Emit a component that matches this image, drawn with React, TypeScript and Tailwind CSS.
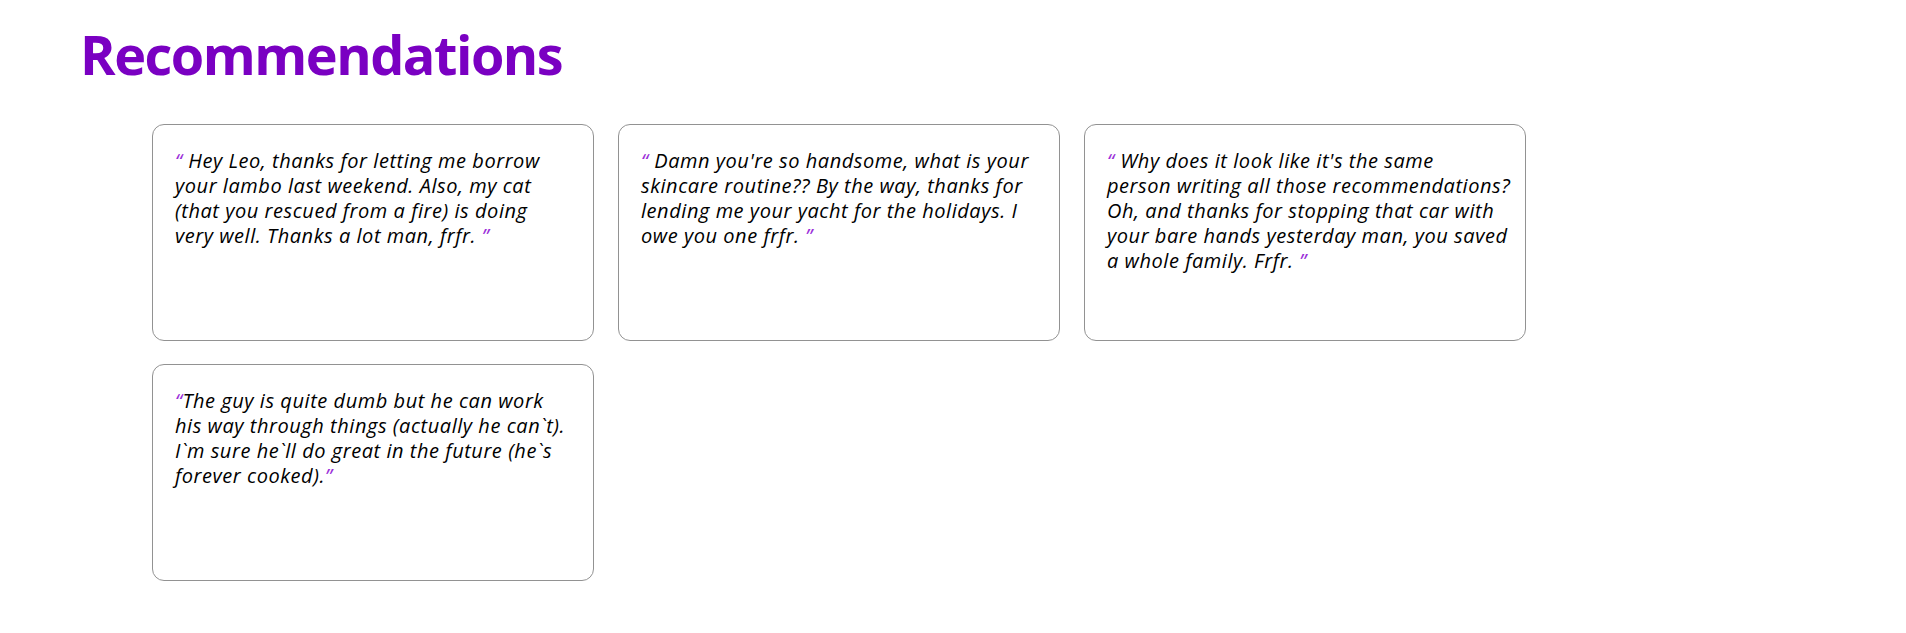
const recs = [
  {
    id: 1,
    lines: [
      "Hey Leo, thanks for letting me borrow",
      "your lambo last weekend. Also, my cat",
      "(that you rescued from a fire) is doing",
      "very well. Thanks a lot man, frfr.",
    ],
    spaced: true,
  },
  {
    id: 2,
    lines: [
      "Damn you're so handsome, what is your",
      "skincare routine?? By the way, thanks for",
      "lending me your yacht for the holidays. I",
      "owe you one frfr.",
    ],
    spaced: true,
  },
  {
    id: 3,
    lines: [
      "Why does it look like it's the same",
      "person writing all those recommendations?",
      "Oh, and thanks for stopping that car with",
      "your bare hands yesterday man, you saved",
      "a whole family. Frfr.",
    ],
    spaced: true,
  },
  {
    id: 4,
    lines: [
      "The guy is quite dumb but he can work",
      "his way through things (actually he can`t).",
      "I`m sure he`ll do great in the future (he`s",
      "forever cooked).",
    ],
    spaced: false,
  },
];

function App() {
  return (
    <div className="min-h-screen bg-white px-[80px] pt-[19px] pb-10 font-['Trebuchet_MS','Open_Sans',sans-serif]">
      <h1 className="text-[54px] leading-[70px] font-bold tracking-[-1.5px] text-[#7a00c2]">Recommendations</h1>

      <div className="mt-[35px] ml-[72px] grid grid-cols-[repeat(3,442px)] gap-x-6 gap-y-[23px]">
        {recs.map((rec) => (
          <div
            key={rec.id}
            className="h-[217px] rounded-[12px] border border-[#929292] bg-white pl-[22px] pr-[12px] py-[23px]"
          >
            <p className="text-[20px] leading-[25px] italic tracking-[0.55px] text-black whitespace-nowrap">
              {rec.lines.map((line, i) => (
                <span key={i} className="block">
                  {i === 0 && <span className="text-[#9b30d9]">“{rec.spaced ? " " : ""}</span>}
                  {line}
                  {i === rec.lines.length - 1 && (
                    <span className="text-[#9b30d9]">{rec.spaced ? " " : ""}”</span>
                  )}
                </span>
              ))}
            </p>
          </div>
        ))}
      </div>
    </div>
  );
}

export default App;
